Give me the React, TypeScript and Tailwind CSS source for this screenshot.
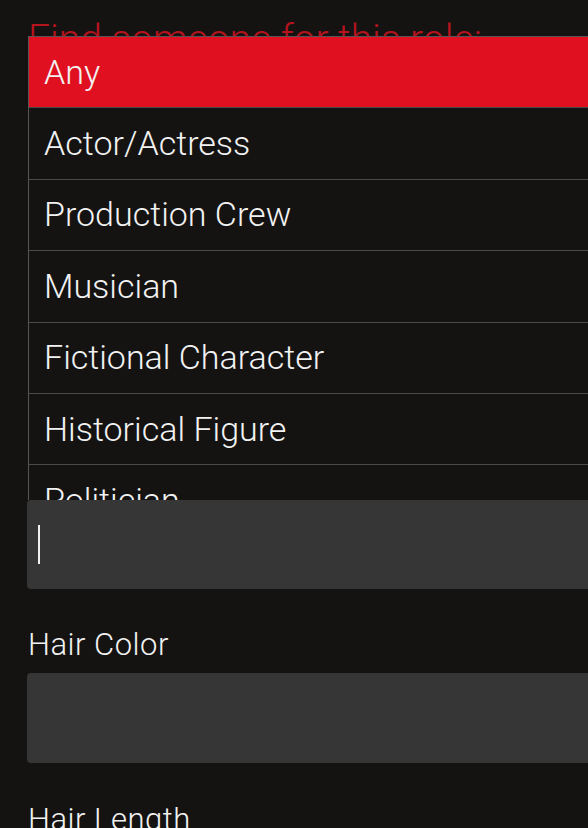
import React from "react";

const items = [
  "Any",
  "Actor/Actress",
  "Production Crew",
  "Musician",
  "Fictional Character",
  "Historical Figure",
  "Politician",
];

export default function App() {
  return (
    <div className="w-[588px] h-[828px] overflow-hidden bg-[#141312] font-['Roboto','Liberation_Sans',sans-serif] font-light text-[#f2f2f2]">
      <div className="w-[640px] pl-[28px]">
        <div className="whitespace-nowrap pt-[16px] text-[39px] leading-[46px] text-[#b5141f]">
          Find someone for this role:
        </div>
        <div className="relative -mt-[26px] h-[464px] overflow-hidden border-l border-t border-[#565656] bg-[#141312]">
          {items.map((it, i) => (
            <div
              key={it}
              className={`flex h-[71.4px] items-center border-b border-[#4a4a4a] pl-[15px] text-[34px] ${
                i === 0 ? "bg-[#e01020]" : "bg-[#141312]"
              }`}
            >
              {it}
            </div>
          ))}
        </div>
        <div className="-ml-px flex h-[89px] items-center rounded-[4px] bg-[#363636] pl-[11px]">
          <div className="h-[39px] w-[2px] bg-[#f0f0f0]" />
        </div>
        <div className="mt-[37px] text-[31px] leading-[37px] tracking-[0.5px]">Hair Color</div>
        <div className="-ml-px mt-[10px] h-[90px] rounded-[4px] bg-[#363636]" />
        <div className="mt-[38px] text-[31px] leading-[37px] tracking-[0.5px]">Hair Length</div>
      </div>
    </div>
  );
}
